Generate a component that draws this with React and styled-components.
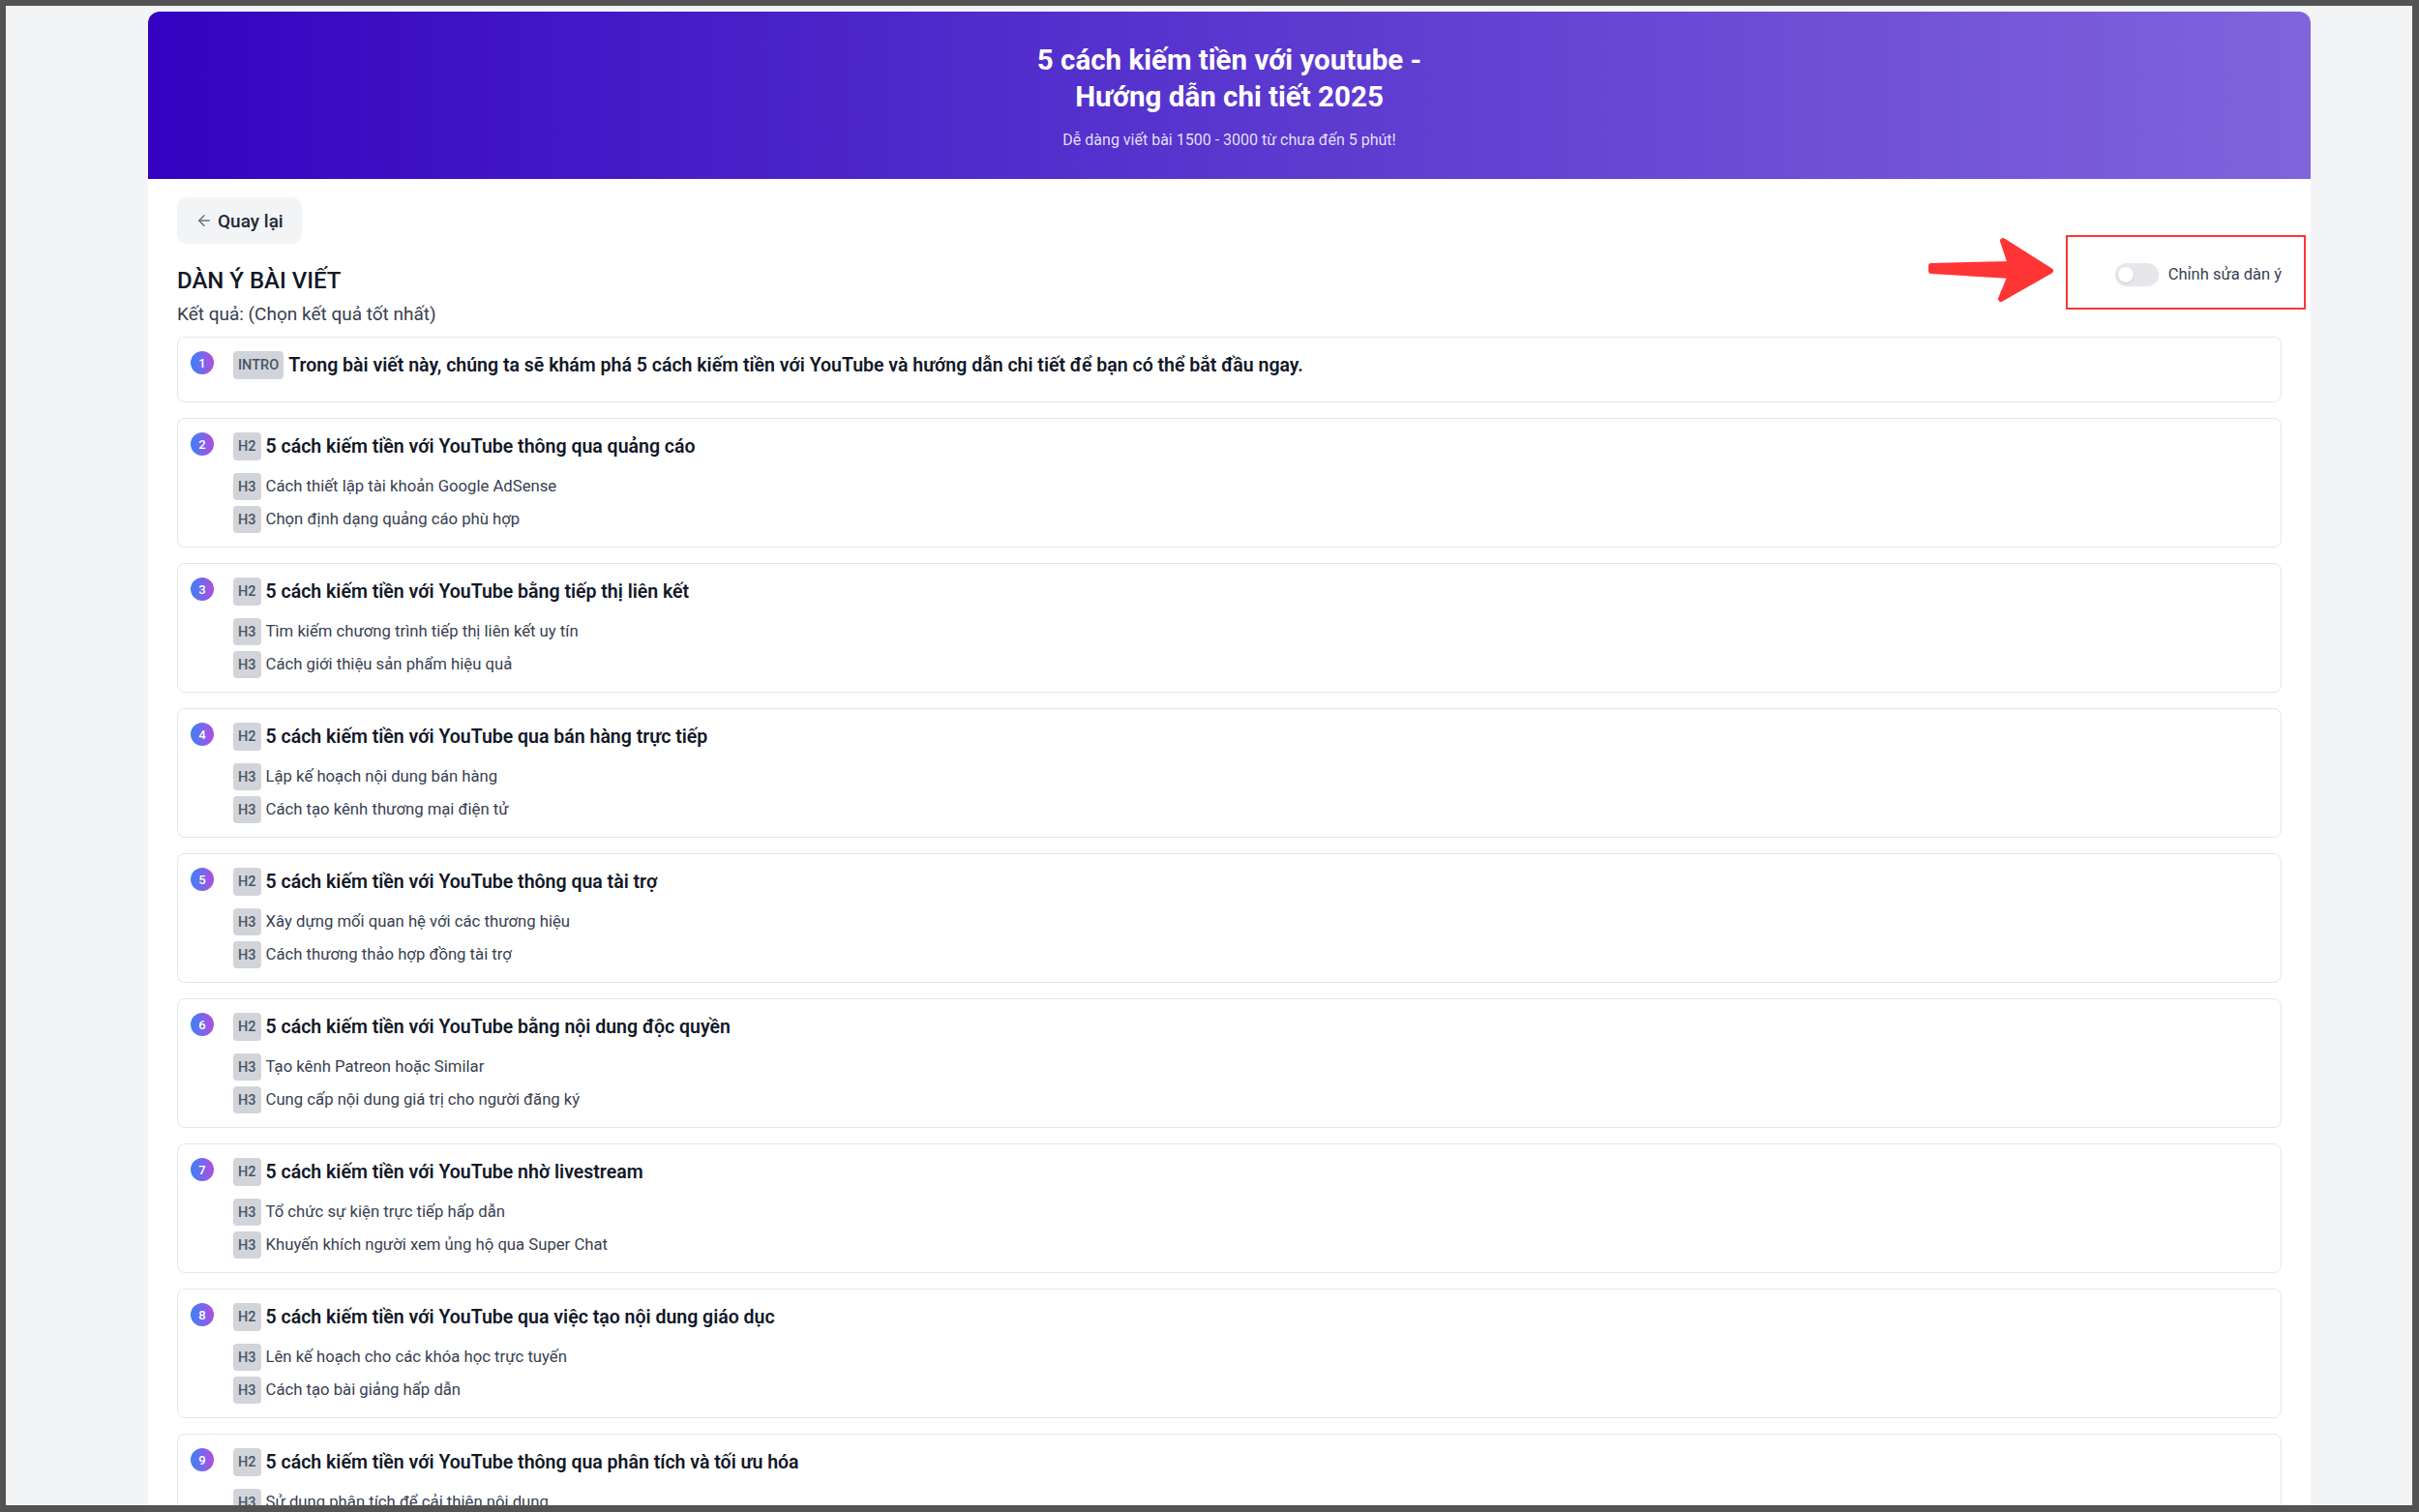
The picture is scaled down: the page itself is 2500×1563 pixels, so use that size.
import styled, { createGlobalStyle } from 'styled-components'
import { ArrowLeft } from 'lucide-react'

const GlobalStyle = createGlobalStyle`
  * { box-sizing: border-box; }
  html, body { margin: 0; padding: 0; }
  body {
    font-family: Roboto, "Noto Sans", sans-serif;
    background: #535353;
    color: #111827;
  }
`

const Frame = styled.div`
  height: 100vh;
  padding: 6px 7px 7px 6px;
  background: #535353;
`

const Viewport = styled.div`
  height: 100%;
  overflow: hidden;
  background: #f3f4f6;
  padding: 6px 105px 0 147px;
`

const Sheet = styled.main`
  min-height: 100%;
  background: #fff;
  border-radius: 12px 12px 0 0;
  overflow: hidden;
`

const Hero = styled.header`
  padding: 31px 24px 28px;
  text-align: center;
  color: #fff;
  background: linear-gradient(90deg, #3303c1 0%, #5632cd 45%, #8064dc 100%);
`

const HeroTitle = styled.h1`
  margin: 0 auto;
  max-width: 460px;
  font-size: 29.5px;
  line-height: 38px;
  font-weight: 700;
`

const HeroSub = styled.p`
  margin: 14px 0 0;
  font-size: 16px;
  line-height: 24px;
  color: rgba(255, 255, 255, 0.85);
`

const Body = styled.section`
  padding: 19px 30px 40px;
`

const BackButton = styled.button`
  display: inline-flex;
  align-items: center;
  gap: 5px;
  height: 48px;
  padding: 0 19px;
  border: 0;
  border-radius: 10px;
  background: #f3f4f6;
  font-family: inherit;
  font-size: 19px;
  font-weight: 500;
  color: #1f2937;
  cursor: pointer;

  svg {
    color: #6b7280;
  }
`

const HeadRow = styled.div`
  display: flex;
  justify-content: space-between;
  align-items: flex-start;
  margin-top: 22px;
`

const SectionTitle = styled.h2`
  margin: 0;
  font-size: 24px;
  line-height: 32px;
  font-weight: 500;
  color: #111827;
`

const SectionNote = styled.p`
  margin: 6px 0 0;
  font-size: 19px;
  line-height: 26px;
  color: #374151;
`

const ToggleWrap = styled.label`
  position: relative;
  display: flex;
  align-items: center;
  gap: 10px;
  margin-top: -2px;
  font-size: 16.5px;
  line-height: 24px;
  color: #374151;
`

const Switch = styled.span`
  position: relative;
  width: 45px;
  height: 24px;
  border-radius: 12px;
  background: #e5e7eb;

  &::after {
    content: '';
    position: absolute;
    top: 4px;
    left: 3px;
    width: 16px;
    height: 16px;
    border-radius: 50%;
    background: #fff;
    box-shadow: 0 1px 2px rgba(0, 0, 0, 0.15);
  }
`

const Highlight = styled.span`
  position: absolute;
  top: -29px;
  bottom: -24px;
  left: -51px;
  right: -25px;
  border: 2px solid #ff3535;
  pointer-events: none;
`

const Pointer = styled.svg`
  position: absolute;
  left: -196px;
  top: -30px;
  width: 136px;
  height: 74px;
`

const CardList = styled.div`
  display: flex;
  flex-direction: column;
  gap: 16px;
  margin-top: 10px;
`

const Card = styled.article`
  display: flex;
  gap: 20px;
  padding: 14px 13px;
  border: 1px solid #e5e7eb;
  border-radius: 8px;
  background: #fff;
`

const Num = styled.span`
  flex: none;
  display: grid;
  place-items: center;
  width: 24px;
  height: 24px;
  border-radius: 50%;
  background: linear-gradient(90deg, #3b82f6, #b04ee0);
  color: #fff;
  font-size: 13px;
  font-weight: 500;
`

const Content = styled.div`
  flex: 1;
  min-width: 0;
`

const Line = styled.div`
  display: flex;
  align-items: center;
  gap: 5px;
  min-height: 28px;
`

const Tag = styled.span`
  flex: none;
  display: inline-flex;
  align-items: center;
  height: ${({ $tall }) => ($tall ? 29 : 28)}px;
  padding: 0 5px;
  border-radius: 4px;
  background: #d1d5db;
  color: #4b5563;
  font-size: 14.5px;
  font-weight: 500;
`

const Heading = styled.span`
  font-size: 19.5px;
  line-height: 28px;
  font-weight: 600;
  color: #111827;
`

const SubList = styled.div`
  display: flex;
  flex-direction: column;
  gap: 6px;
  margin-top: 9px;

  &:not(:empty) {
    padding-top: 4px;
  }
`

const SubText = styled.span`
  font-size: 16.7px;
  line-height: 28px;
  color: #374151;
`

const OUTLINE = [
  {
    tag: 'INTRO',
    title: 'Trong bài viết này, chúng ta sẽ khám phá 5 cách kiếm tiền với YouTube và hướng dẫn chi tiết để bạn có thể bắt đầu ngay.',
    items: [],
  },
  {
    tag: 'H2',
    title: '5 cách kiếm tiền với YouTube thông qua quảng cáo',
    items: ['Cách thiết lập tài khoản Google AdSense', 'Chọn định dạng quảng cáo phù hợp'],
  },
  {
    tag: 'H2',
    title: '5 cách kiếm tiền với YouTube bằng tiếp thị liên kết',
    items: ['Tìm kiếm chương trình tiếp thị liên kết uy tín', 'Cách giới thiệu sản phẩm hiệu quả'],
  },
  {
    tag: 'H2',
    title: '5 cách kiếm tiền với YouTube qua bán hàng trực tiếp',
    items: ['Lập kế hoạch nội dung bán hàng', 'Cách tạo kênh thương mại điện tử'],
  },
  {
    tag: 'H2',
    title: '5 cách kiếm tiền với YouTube thông qua tài trợ',
    items: ['Xây dựng mối quan hệ với các thương hiệu', 'Cách thương thảo hợp đồng tài trợ'],
  },
  {
    tag: 'H2',
    title: '5 cách kiếm tiền với YouTube bằng nội dung độc quyền',
    items: ['Tạo kênh Patreon hoặc Similar', 'Cung cấp nội dung giá trị cho người đăng ký'],
  },
  {
    tag: 'H2',
    title: '5 cách kiếm tiền với YouTube nhờ livestream',
    items: ['Tổ chức sự kiện trực tiếp hấp dẫn', 'Khuyến khích người xem ủng hộ qua Super Chat'],
  },
  {
    tag: 'H2',
    title: '5 cách kiếm tiền với YouTube qua việc tạo nội dung giáo dục',
    items: ['Lên kế hoạch cho các khóa học trực tuyến', 'Cách tạo bài giảng hấp dẫn'],
  },
  {
    tag: 'H2',
    title: '5 cách kiếm tiền với YouTube thông qua phân tích và tối ưu hóa',
    items: ['Sử dụng phân tích để cải thiện nội dung', 'Tối ưu hóa tiêu đề và mô tả video'],
  },
]

function OutlineCard({ index, tag, title, items }) {
  return (
    <Card>
      <Num>{index}</Num>
      <Content>
        <Line>
          <Tag $tall>{tag}</Tag>
          <Heading>{title}</Heading>
        </Line>
        <SubList>
          {items.map((item) => (
            <Line key={item}>
              <Tag>H3</Tag>
              <SubText>{item}</SubText>
            </Line>
          ))}
        </SubList>
      </Content>
    </Card>
  )
}

export default function App() {
  return (
    <>
      <GlobalStyle />
      <Frame>
        <Viewport>
          <Sheet>
            <Hero>
              <HeroTitle>5 cách kiếm tiền với youtube - Hướng dẫn chi tiết 2025</HeroTitle>
              <HeroSub>Dễ dàng viết bài 1500 - 3000 từ chưa đến 5 phút!</HeroSub>
            </Hero>
            <Body>
              <BackButton>
                <ArrowLeft size={18} strokeWidth={2} />
                Quay lại
              </BackButton>
              <HeadRow>
                <div>
                  <SectionTitle>DÀN Ý BÀI VIẾT</SectionTitle>
                  <SectionNote>Kết quả: (Chọn kết quả tốt nhất)</SectionNote>
                </div>
                <ToggleWrap>
                  <Pointer viewBox="0 0 136 74">
                    <polygon
                      points="6,33 88,31 80,7 129,38 78,67 88,43 6,38"
                      fill="#ff3535"
                      stroke="#ff3535"
                      strokeWidth="6"
                      strokeLinejoin="round"
                    />
                  </Pointer>
                  <Highlight />
                  <Switch />
                  Chỉnh sửa dàn ý
                </ToggleWrap>
              </HeadRow>
              <CardList>
                {OUTLINE.map((row, i) => (
                  <OutlineCard key={row.title} index={i + 1} {...row} />
                ))}
              </CardList>
            </Body>
          </Sheet>
        </Viewport>
      </Frame>
    </>
  )
}
